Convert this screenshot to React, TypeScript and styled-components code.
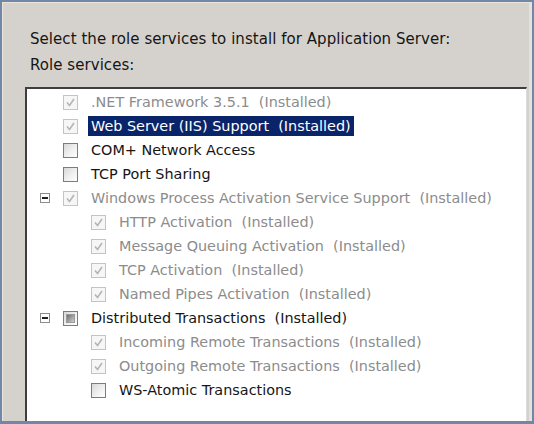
import React from "react";
import styled, { createGlobalStyle } from "styled-components";

const Global = createGlobalStyle`
  html, body { margin: 0; padding: 0; background: #d5d2cd; }
  #root { width: 534px; height: 424px; }
`;

const Frame = styled.div`
  box-sizing: border-box;
  width: 534px;
  height: 424px;
  border: 2px solid #7088a8;
  border-bottom-width: 3px;
  box-shadow: inset 1px 1px 0 #ece4dc, inset -3px 0 0 #e4e2de;
  background: #d5d2cd;
  display: flex;
  flex-direction: column;
  padding: 24px 5px 0 23px;
  overflow: hidden;
  font-family: "DejaVu Sans", "Liberation Sans", sans-serif;
  font-size: 15px;
  color: #151515;
`;

const Heading = styled.div`
  padding-left: 5px;
  height: 26px;
  line-height: 26px;
  letter-spacing: 0.05px;
`;

const SubHeading = styled(Heading)`
  margin-bottom: 9px;
`;

const ListBox = styled.div`
  flex: 1;
  background: #fff;
  border-top: 2px solid #3e3e3e;
  border-left: 2px solid #3e3e3e;
  border-right: 1px solid #dcdcdc;
  padding-top: 1px;
  display: flex;
  flex-direction: column;
`;

const Row = styled.div<{ $level: number }>`
  height: 24px;
  display: flex;
  align-items: center;
  padding-left: ${(p) => 13 + p.$level * 28}px;
`;

const ExpanderSlot = styled.div`
  width: 10px;
  height: 10px;
  margin-right: 13px;
  display: flex;
  align-items: center;
  justify-content: center;
`;

const Expander = styled.div`
  box-sizing: border-box;
  width: 10px;
  height: 10px;
  border: 1px solid #8e8e8e;
  background: #fff;
  position: relative;
  &::after {
    content: "";
    position: absolute;
    left: 1px;
    right: 1px;
    top: 3px;
    height: 2px;
    background: #222;
  }
`;

type BoxKind = "checkedDisabled" | "unchecked" | "indeterminate";

const Box = styled.div<{ $kind: BoxKind }>`
  box-sizing: border-box;
  width: 15px;
  height: 15px;
  flex: none;
  display: flex;
  align-items: center;
  justify-content: center;
  border: 1px solid ${(p) => (p.$kind === "checkedDisabled" ? "#c4c4c4" : "#7c7c7c")};
  background: ${(p) =>
    p.$kind === "checkedDisabled"
      ? "#f6f6f6"
      : "linear-gradient(135deg, #d8d8d8 0%, #f2f2f2 60%, #ffffff 100%)"};
`;

const IndeterminateFill = styled.div`
  width: 9px;
  height: 9px;
  background: linear-gradient(135deg, #6e6e6e 0%, #a8a8a8 60%, #cfcfcf 100%);
  border: 1px solid #9a9a9a;
  box-sizing: border-box;
`;

const Label = styled.span<{ $disabled?: boolean; $selected?: boolean }>`
  margin-left: 10px;
  padding: 1px 3px;
  font-size: 14.4px;
  line-height: 18px;
  white-space: pre;
  color: ${(p) => (p.$selected ? "#ffffff" : p.$disabled ? "#8c8c8c" : "#151515")};
  background: ${(p) => (p.$selected ? "#0a246a" : "transparent")};
`;

const Check = () => (
  <svg width="11" height="11" viewBox="0 0 11 11">
    <path d="M2 5.5 L4.5 8.5 L9 2" fill="none" stroke="#b4b4b4" strokeWidth="1.6" />
  </svg>
);

type Item = {
  text: string;
  level: number;
  kind: BoxKind;
  disabled?: boolean;
  selected?: boolean;
  expander?: boolean;
};

const items: Item[] = [
  { text: ".NET Framework 3.5.1  (Installed)", level: 0, kind: "checkedDisabled", disabled: true },
  { text: "Web Server (IIS) Support  (Installed)", level: 0, kind: "checkedDisabled", selected: true },
  { text: "COM+ Network Access", level: 0, kind: "unchecked" },
  { text: "TCP Port Sharing", level: 0, kind: "unchecked" },
  { text: "Windows Process Activation Service Support  (Installed)", level: 0, kind: "checkedDisabled", disabled: true, expander: true },
  { text: "HTTP Activation  (Installed)", level: 1, kind: "checkedDisabled", disabled: true },
  { text: "Message Queuing Activation  (Installed)", level: 1, kind: "checkedDisabled", disabled: true },
  { text: "TCP Activation  (Installed)", level: 1, kind: "checkedDisabled", disabled: true },
  { text: "Named Pipes Activation  (Installed)", level: 1, kind: "checkedDisabled", disabled: true },
  { text: "Distributed Transactions  (Installed)", level: 0, kind: "indeterminate", expander: true },
  { text: "Incoming Remote Transactions  (Installed)", level: 1, kind: "checkedDisabled", disabled: true },
  { text: "Outgoing Remote Transactions  (Installed)", level: 1, kind: "checkedDisabled", disabled: true },
  { text: "WS-Atomic Transactions", level: 1, kind: "unchecked" },
];

export default function App() {
  return (
    <>
      <Global />
      <Frame>
        <Heading>Select the role services to install for Application Server:</Heading>
        <SubHeading>Role services:</SubHeading>
        <ListBox>
          {items.map((it) => (
            <Row key={it.text} $level={it.level}>
              <ExpanderSlot>{it.expander && <Expander />}</ExpanderSlot>
              <Box $kind={it.kind}>
                {it.kind === "checkedDisabled" && <Check />}
                {it.kind === "indeterminate" && <IndeterminateFill />}
              </Box>
              <Label $disabled={it.disabled} $selected={it.selected}>
                {it.text}
              </Label>
            </Row>
          ))}
        </ListBox>
      </Frame>
    </>
  );
}
